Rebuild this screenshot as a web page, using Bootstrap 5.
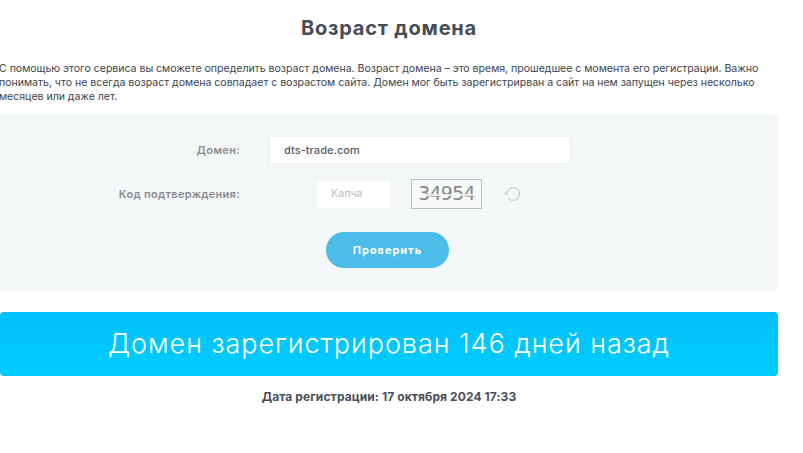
<!DOCTYPE html>
<html lang="ru"><head><meta charset="utf-8">
<link href="https://cdn.jsdelivr.net/npm/bootstrap@5.3.0/dist/css/bootstrap.min.css" rel="stylesheet">
<style>
html,body{height:453px;overflow:hidden;background:#fff}
body{font-family:Inter,"Liberation Sans",sans-serif;color:#474d57}
.pagewrap{width:778px}
.pagetitle{font-size:20px;font-weight:700;line-height:22px;padding-top:17px;margin:0;color:#474d57;letter-spacing:.8px;text-align:center}
.intro{font-size:10.6px;line-height:14px;margin:23px 0 10px -1px;color:#40454e;letter-spacing:-.04px;width:770px}
.formbox{height:177px;background:#f4f7f7;border-radius:4px;padding-top:22px}
.lbl{width:240px;text-align:right;font-size:11px;font-weight:600;color:#8a8d92;letter-spacing:.3px;flex:none}
.domain{margin-left:29px;width:301px;height:28px;background:#fff;border:1px solid #f0f2f2;font-size:11px;font-weight:500;color:#565b68;padding:0 14px;display:flex;align-items:center;letter-spacing:.05px}
.row-code{margin-top:15px}
.capinput{margin-left:77px;width:74px;height:29px;background:#fff;border:1px dotted #e9ebee;font-size:10.5px;font-weight:500;color:#bfc3cc;padding-left:13px;display:flex;align-items:center}
.capimg{margin-left:20px;width:71px;height:30px;border:1px solid #b9bcc0;background:#f7f8f8;font-family:"DejaVu Sans",sans-serif;font-size:19px;line-height:26px;color:#85888c;text-align:center;letter-spacing:-.8px;overflow:hidden;position:relative}
.capimg::after{content:"";position:absolute;left:0;right:0;top:14px;height:2px;background:#f7f8f8;opacity:.8}
.reload{margin-left:21px;display:block}
.checkbtn{margin:23px 0 0 326px;width:123px;height:36px;border-radius:18px;background:#4cbce8;color:#fff;font-size:11px;font-weight:700;border:0;padding:0;letter-spacing:.95px}
.resultbar{margin-top:21px;height:64px;border-radius:4px;background:linear-gradient(#00c0fb,#00cdff);color:#fff;font-size:27px;font-weight:300;letter-spacing:.95px;display:flex;align-items:center;justify-content:center}
.regdate{margin:13px 0 0;font-size:12px;font-weight:700;color:#4a4f59;text-align:center;line-height:16px;letter-spacing:.1px}
</style></head>
<body>
<main class="pagewrap">
<h1 class="pagetitle">Возраст домена</h1>
<p class="intro">С помощью этого сервиса вы сможете определить возраст домена. Возраст домена – это время, прошедшее с момента его регистрации. Важно понимать, что не всегда возраст домена совпадает с возрастом сайта. Домен мог быть зарегистрирван а сайт на нем запущен через несколько месяцев или даже лет.</p>
<form class="formbox">
<div class="d-flex align-items-center"><div class="lbl">Домен:</div><div class="domain">dts-trade.com</div></div>
<div class="d-flex align-items-center row-code"><div class="lbl">Код подтверждения:</div><div class="capinput">Капча</div><div class="capimg">34954</div>
<svg class="reload" width="20" height="16" viewBox="0 0 20 16" fill="none"><path d="M5 4.5A6.3 6.3 0 1 1 5 11.5" stroke="#b9bdc0" stroke-width="1.1" stroke-dasharray="2 .6"/><path d="M5 4.5 1.5 8 5 8" stroke="#b9bdc0" stroke-width="1"/></svg></div>
<button type="button" class="btn checkbtn">Проверить</button>
</form>
<div class="resultbar">Домен зарегистрирован 146 дней назад</div>
<p class="regdate">Дата регистрации: 17 октября 2024 17:33</p>
</main>
<script src="https://cdn.jsdelivr.net/npm/bootstrap@5.3.0/dist/js/bootstrap.bundle.min.js"></script>
</body></html>
